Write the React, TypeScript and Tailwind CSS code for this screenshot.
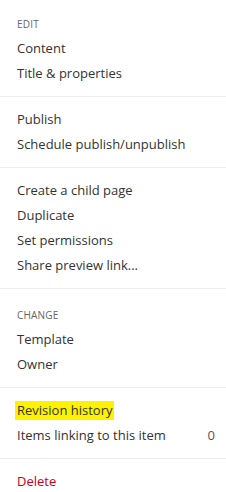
import React from "react";

type Item = { label: string; count?: string; highlight?: boolean; danger?: boolean };
type Section = { header?: string; items: Item[] };

const sections: Section[] = [
  { header: "EDIT", items: [{ label: "Content" }, { label: "Title & properties" }] },
  { items: [{ label: "Publish" }, { label: "Schedule publish/unpublish" }] },
  {
    items: [
      { label: "Create a child page" },
      { label: "Duplicate" },
      { label: "Set permissions" },
      { label: "Share preview link..." },
    ],
  },
  { header: "CHANGE", items: [{ label: "Template" }, { label: "Owner" }] },
  {
    items: [
      { label: "Revision history", highlight: true },
      { label: "Items linking to this item", count: "0" },
    ],
  },
  { items: [{ label: "Delete", danger: true }] },
];

export default function App() {
  return (
    <div
      className="w-[226px] h-[492px] bg-white overflow-hidden"
      style={{ fontFamily: '"Open Sans", "Noto Sans", sans-serif' }}
    >
      {sections.map((s, i) => (
        <div
          key={i}
          className={`${i === 0 ? "pt-[8px]" : "pt-[10px] border-t border-[#ececec]"} pb-[10px]`}
        >
          {s.header && (
            <div className="h-[28px] pt-[5px] flex items-center pl-[17px] text-[10px] text-[#666] tracking-[0.2px]">
              {s.header}
            </div>
          )}
          {s.items.map((it) => (
            <div
              key={it.label}
              className={`h-[25px] flex items-center justify-between pl-[17px] pr-[11px] text-[13px] ${
                it.danger ? "text-[#c4001a]" : "text-[#333]"
              }`}
            >
              <span className={it.highlight ? "bg-[#fff200] px-[2px] -mx-[2px]" : ""}>{it.label}</span>
              {it.count && <span className="text-[#555]">{it.count}</span>}
            </div>
          ))}
        </div>
      ))}
    </div>
  );
}
